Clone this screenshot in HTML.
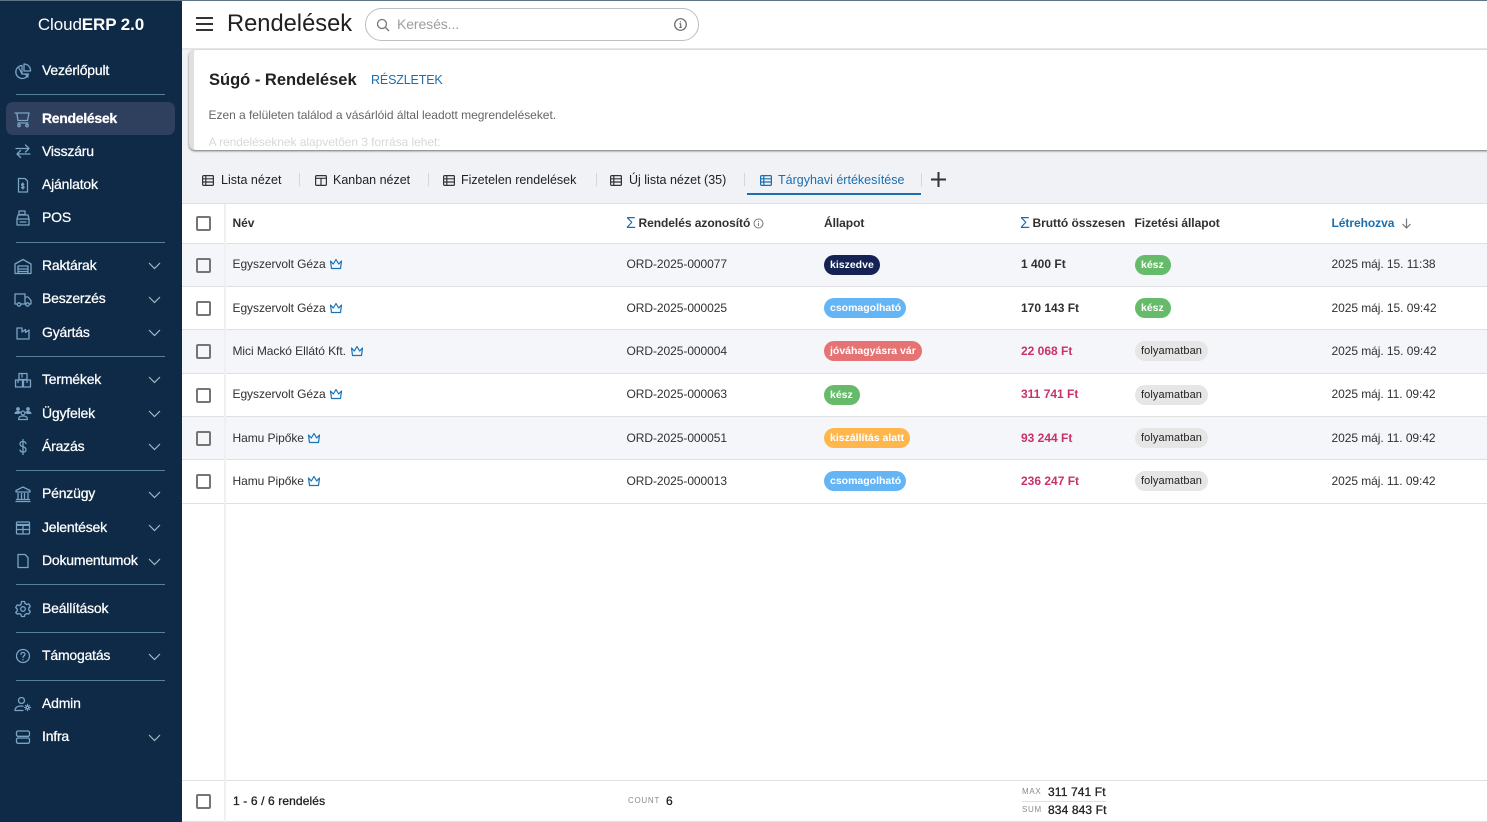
<!DOCTYPE html>
<html lang="hu">
<head>
<meta charset="utf-8">
<title>Rendelések</title>
<style>
html,body{margin:0;padding:0;width:1487px;height:822px;overflow:hidden;background:#f1f2f6;font-family:"Liberation Sans",sans-serif;color:#212121}
*{box-sizing:border-box}
.a{position:absolute;white-space:nowrap}
#side{position:absolute;left:0;top:0;width:182px;height:822px;background:#0e2a47}
#top{position:absolute;left:0;top:0;width:1487px;height:1px;background:#5f7484;z-index:5}
.logo{left:0;width:182px;text-align:center;top:15px;font-size:17px;line-height:20px;color:#fff;letter-spacing:-.1px}
.logo b{font-weight:700}
.hl{position:absolute;left:16px;width:149px;height:1px;background:#5a7f9e}
.act{position:absolute;left:6px;top:102px;width:169px;height:33px;border-radius:7px;background:#2f405f}
.it{position:absolute;left:42px;font-size:14px;line-height:16px;color:#fff;-webkit-text-stroke:.25px #fff;white-space:nowrap;letter-spacing:-.2px}
.ic{position:absolute;left:14px;width:18px;height:18px;fill:none;stroke:#7ba3c4;stroke-width:1.3;stroke-linecap:round;stroke-linejoin:round}
.ch{position:absolute;left:148px;width:13px;height:8px;fill:none;stroke:#a5b8c9;stroke-width:1.2}
#hdr{position:absolute;left:182px;top:1px;width:1305px;height:47px;background:#fff}
#hsep{position:absolute;left:182px;top:48px;width:1305px;height:2px;background:#e7e7e7}
.title{left:227px;top:9px;font-size:23.7px;line-height:30px;color:#212121}
.search{position:absolute;left:365px;top:8px;width:334px;height:33px;border:1px solid #bdbdbd;border-radius:17px;background:#fff}
#card{position:absolute;left:189px;top:50px;width:1310px;height:100px;background:#fff;border-left:5px solid #e3dfdd;border-radius:6px;box-shadow:0 1px 2px rgba(0,0,0,.55);overflow:hidden}
.tab{top:172px;font-size:12.5px;line-height:16px;color:#212121}
.tsep{position:absolute;top:173px;width:1px;height:13px;background:#d4d6dc}
.tic{position:absolute;top:175px;width:12px;height:11px;fill:none;stroke:#333;stroke-width:1.2}
#tbl{position:absolute;left:182px;top:204px;width:1305px;height:618px;background:#fff}
.line{position:absolute;left:182px;width:1305px;height:1px;background:#e0e0e0}
.row{position:absolute;left:182px;width:1305px;background:#f5f6fa}
#vl{position:absolute;left:224px;top:204px;width:2px;height:618px;background:#f0f0f0}
.cb{position:absolute;left:196px;width:15px;height:15px;border:2px solid #757575;border-radius:2px;background:transparent}
.th{top:215px;margin-top:1px;font-size:12px;line-height:15px;font-weight:700;color:#303030;letter-spacing:-.05px}
.td{margin-top:1px;font-size:12px;line-height:15px;color:#303030}
.o{letter-spacing:-.06px}
.b{font-weight:700}
.red{color:#c9306b;font-weight:700}
.pill{position:absolute;height:20px;border-radius:10px;font-size:10.5px;line-height:21px;font-weight:700;color:#fff;padding:0 6px;white-space:nowrap}
.gr{background:#66bb6a}.bl{background:#64b5f6}.rd{background:#e57373}.or{background:#ffb74d}.nv{background:#152354}
.fo{background:#e6e6e6;color:#222;font-weight:400;font-size:11px;letter-spacing:.1px}
.cr{position:absolute;width:14px;height:12px;fill:none;stroke:#1a73b8;stroke-width:1.2;stroke-linejoin:round}
.sig{position:absolute;top:215.500px;font-size:16px;line-height:16px;color:#1a6fb0}
.small{font-size:8px;line-height:10px;letter-spacing:.7px;color:#8a8a8a}
.ft{font-size:12px;line-height:14px;color:#212121;-webkit-text-stroke:.3px #212121;letter-spacing:.12px}
</style>
</head>
<body>
<div id="top"></div>
<div id="side">
  <div class="a logo">Cloud<b>ERP 2.0</b></div>

  <svg class="ic" style="top:62px" viewBox="0 0 18 18"><path d="M8 3.500a6.500 6.500 0 1 0 6.500 8.500H8z"/><path d="M10 2v7h6.500a6.500 6.500 0 0 0-6.500-7z"/><path d="M5 6l3 6M11 12l3 3"/></svg>
  <div class="it" style="top:62px">Vezérlőpult</div>
  <div class="hl" style="top:94px"></div>

  <div class="act"></div>
  <svg class="ic" style="top:110px" viewBox="0 0 18 18"><path d="M1 3h14l-1.500 7.500H4L2.800 3M4 13h10"/><circle cx="5" cy="15.500" r="1.200"/><circle cx="13" cy="15.500" r="1.200"/></svg>
  <div class="it" style="top:110px;font-weight:700;letter-spacing:-.3px">Rendelések</div>

  <svg class="ic" style="top:142px" viewBox="0 0 18 18"><path d="M2 6.500h13M11.500 3l3.500 3.500L11.500 10M16 12H3M6.500 8.500L3 12l3.500 3.500"/></svg>
  <div class="it" style="top:143px">Visszáru</div>

  <svg class="ic" style="top:176px" viewBox="0 0 18 18"><path d="M4.500 2.500h6.500l2.500 2.500v11h-9z"/><path d="M9.800 8.500C9.500 8 9.200 7.800 8.800 7.800c-.8 0-1.200.4-1.200 1s.5.900 1.200 1.200 1.200.6 1.200 1.200-.4 1-1.200 1c-.5 0-.9-.2-1.200-.7M8.800 7v6"/></svg>
  <div class="it" style="top:176px">Ajánlatok</div>

  <svg class="ic" style="top:209px" viewBox="0 0 18 18"><path d="M5 2h6v3.500H5zM4 6h10l1 4H3zM3 10h12v6H3z"/><path d="M6 13h6"/></svg>
  <div class="it" style="top:209px">POS</div>
  <div class="hl" style="top:242px"></div>

  <svg class="ic" style="top:257px" viewBox="0 0 18 18"><path d="M1 7l8-4.500L17 7v9.500H1zM4 9h10v7.500H4zM4 12h10M4 14.500h10"/></svg>
  <div class="it" style="top:257px">Raktárak</div>
  <svg class="ch" style="top:262px" viewBox="0 0 13 8"><path d="M1 1l5.500 5.500L12 1"/></svg>

  <svg class="ic" style="top:290px" viewBox="0 0 18 18"><path d="M3.500 14H1V4h10v10H7M11 7h3l3 3.500V14h-1.500M11 14h1"/><circle cx="5" cy="14.500" r="1.700"/><circle cx="13.500" cy="14.500" r="1.700"/></svg>
  <div class="it" style="top:290px">Beszerzés</div>
  <svg class="ch" style="top:296px" viewBox="0 0 13 8"><path d="M1 1l5.500 5.500L12 1"/></svg>

  <svg class="ic" style="top:324px" viewBox="0 0 18 18"><path d="M3 4v11h12V6l-3.500 2.500V5.500L8 8V4z"/></svg>
  <div class="it" style="top:324px">Gyártás</div>
  <svg class="ch" style="top:329px" viewBox="0 0 13 8"><path d="M1 1l5.500 5.500L12 1"/></svg>
  <div class="hl" style="top:356px"></div>

  <svg class="ic" style="top:371px" viewBox="0 0 18 18"><path d="M5 2.500h8v6H5zM1.500 9h7v7h-7zM9.500 9h7v7h-7zM8 3v3M4 9v2.500M13 9v2.500"/></svg>
  <div class="it" style="top:371px">Termékek</div>
  <svg class="ch" style="top:376px" viewBox="0 0 13 8"><path d="M1 1l5.500 5.500L12 1"/></svg>

  <svg class="ic" style="top:404px;fill:#7ba3c4;stroke:none" viewBox="0 0 18 18"><circle cx="4" cy="5" r="1.900"/><circle cx="14" cy="5" r="1.900"/><path d="M.5 10c0-2 1.500-3 3.500-3s3 .8 3 1.500L5 10zM17.500 10c0-2-1.500-3-3.500-3s-3 .8-3 1.500L13 10z"/><circle cx="9" cy="9" r="1.900" fill="none" stroke="#7ba3c4" stroke-width="1.200"/><path d="M4.500 15.500c0-2.500 2-3.500 4.500-3.500s4.500 1 4.500 3.500z" fill="none" stroke="#7ba3c4" stroke-width="1.200"/></svg>
  <div class="it" style="top:405px">Ügyfelek</div>
  <svg class="ch" style="top:410px" viewBox="0 0 13 8"><path d="M1 1l5.500 5.500L12 1"/></svg>

  <svg class="ic" style="top:438px" viewBox="0 0 18 18"><path d="M12 5.500C11.500 4 10.500 3.500 9 3.500c-2 0-3 1-3 2.500s1.200 2.200 3 2.800 3 1.300 3 2.800-1 2.500-3 2.500c-1.500 0-2.600-.6-3-2M9 1.500v15"/></svg>
  <div class="it" style="top:438px">Árazás</div>
  <svg class="ch" style="top:443px" viewBox="0 0 13 8"><path d="M1 1l5.500 5.500L12 1"/></svg>
  <div class="hl" style="top:470px"></div>

  <svg class="ic" style="top:485px" viewBox="0 0 18 18"><path d="M9 2l7 3.500v1.500H2V5.500zM4 8.500v5M7.500 8.500v5M10.500 8.500v5M14 8.500v5M2.500 14.500h13M2 16.500h14"/></svg>
  <div class="it" style="top:485px">Pénzügy</div>
  <svg class="ch" style="top:491px" viewBox="0 0 13 8"><path d="M1 1l5.500 5.500L12 1"/></svg>

  <svg class="ic" style="top:519px" viewBox="0 0 18 18"><path d="M3.500 3h11a1 1 0 0 1 1 1v10a1 1 0 0 1-1 1h-11a1 1 0 0 1-1-1V4a1 1 0 0 1 1-1zM2.500 5.500h13M2.500 6.300h13M2.500 10.500h13M9 6v9"/></svg>
  <div class="it" style="top:519px">Jelentések</div>
  <svg class="ch" style="top:524px" viewBox="0 0 13 8"><path d="M1 1l5.500 5.500L12 1"/></svg>

  <svg class="ic" style="top:552px" viewBox="0 0 18 18"><path d="M4 2.500h7l3 3v10H4z"/></svg>
  <div class="it" style="top:552px">Dokumentumok</div>
  <svg class="ch" style="top:558px" viewBox="0 0 13 8"><path d="M1 1l5.500 5.500L12 1"/></svg>
  <div class="hl" style="top:584px"></div>

  <svg class="ic" style="top:600px" viewBox="0 0 18 18"><path d="M7.500 2h3l.5 2 1.800 1 2-.6 1.500 2.600-1.500 1.500v2l1.500 1.500-1.500 2.600-2-.6-1.800 1-.5 2h-3l-.5-2-1.800-1-2 .6L1.700 13l1.500-1.500v-2L1.700 8l1.500-2.600 2 .6L7 5z" transform="translate(0 -.5)"/><circle cx="9" cy="9" r="2.300"/></svg>
  <div class="it" style="top:600px">Beállítások</div>
  <div class="hl" style="top:632px"></div>

  <svg class="ic" style="top:647px" viewBox="0 0 18 18"><circle cx="9" cy="9" r="6.500"/><path d="M7 7.300C7 6 8 5.500 9 5.500s2 .7 2 1.800c0 1.500-2 1.500-2 3"/><path d="M9 12.500v.3"/></svg>
  <div class="it" style="top:647px">Támogatás</div>
  <svg class="ch" style="top:653px" viewBox="0 0 13 8"><path d="M1 1l5.500 5.500L12 1"/></svg>
  <div class="hl" style="top:680px"></div>

  <svg class="ic" style="top:695px" viewBox="0 0 18 18"><circle cx="7.500" cy="5.500" r="3"/><path d="M1 15.500c0-3 2.500-4.500 6-4.500 .8 0 1.500.1 2 .2M1 15.500h8"/><circle cx="13.500" cy="12.500" r="1.300"/><path d="M13.500 9.300v1.200M13.500 14.500v1.200M10.500 12.500h1.200M15.500 12.500h1.200M11.400 10.400l.8.8M14.800 13.800l.8.8M11.400 14.600l.8-.8M14.800 11.200l.8-.8" stroke-width="1.100"/></svg>
  <div class="it" style="top:695px">Admin</div>

  <svg class="ic" style="top:728px" viewBox="0 0 18 18"><rect x="2.500" y="3" width="13" height="5.300" rx="1.500"/><rect x="2.500" y="10" width="13" height="5.300" rx="1.500"/></svg>
  <div class="it" style="top:728px">Infra</div>
  <svg class="ch" style="top:734px" viewBox="0 0 13 8"><path d="M1 1l5.500 5.500L12 1"/></svg>
</div>

<div id="hdr"></div>
<div id="hsep"></div>
<svg class="a" style="left:195px;top:16px" width="19" height="16" viewBox="0 0 19 16"><path d="M1 2h17M1 8h17M1 14h17" stroke="#333" stroke-width="2" fill="none"/></svg>
<div class="a title">Rendelések</div>
<div class="search"></div>
<svg class="a" style="left:376px;top:18px" width="14" height="14" viewBox="0 0 14 14"><circle cx="6" cy="6" r="4.500" fill="none" stroke="#757575" stroke-width="1.300"/><path d="M9.500 9.500L13 13" stroke="#757575" stroke-width="1.300"/></svg>
<div class="a" style="left:397px;top:16px;font-size:14px;line-height:17px;color:#9e9e9e;letter-spacing:-.1px">Keresés...</div>
<svg class="a" style="left:673px;top:17px" width="15" height="15" viewBox="0 0 15 15"><circle cx="7.500" cy="7.500" r="5.800" fill="none" stroke="#666" stroke-width="1.200"/><path d="M6.500 6.800h1.200v3.200M6.300 10.300h2.600M7.500 4.300v1" stroke="#666" stroke-width="1.100" fill="none"/></svg>

<div id="card"></div>
<div class="a" style="left:209px;top:70px;font-size:16.5px;line-height:20px;font-weight:700;color:#212121">Súgó - Rendelések</div>
<div class="a" style="left:371px;top:72px;font-size:12.5px;line-height:16px;color:#1a6fb0;letter-spacing:-.15px">RÉSZLETEK</div>
<div class="a" style="left:208.500px;top:108px;font-size:12px;line-height:15px;color:#666;letter-spacing:-.03px">Ezen a felületen találod a vásárlóid által leadott megrendeléseket.</div>
<div class="a" style="left:208.500px;top:135px;font-size:12px;line-height:15px;height:14px;overflow:hidden;color:#d8d8d8;letter-spacing:-.05px">A rendeléseknek alapvetően 3 forrása lehet:</div>

<svg class="tic" style="left:202px" viewBox="0 0 12 11"><rect x=".6" y=".6" width="10.800" height="9.800" rx="1"/><path d="M.6 3.800h10.800M.6 7h10.800M3.800 .6v9.800"/></svg>
<div class="a tab" style="left:221px">Lista nézet</div>
<div class="tsep" style="left:299px"></div>
<svg class="tic" style="left:315px" viewBox="0 0 12 11"><rect x=".6" y=".6" width="10.800" height="9.800" rx="1"/><path d="M.6 3.300h10.800M6 3.300v7" /></svg>
<div class="a tab" style="left:333px">Kanban nézet</div>
<div class="tsep" style="left:428px"></div>
<svg class="tic" style="left:443px" viewBox="0 0 12 11"><rect x=".6" y=".6" width="10.800" height="9.800" rx="1"/><path d="M.6 3.800h10.800M.6 7h10.800M3.800 .6v9.800"/></svg>
<div class="a tab" style="left:461px">Fizetelen rendelések</div>
<div class="tsep" style="left:596px"></div>
<svg class="tic" style="left:610px" viewBox="0 0 12 11"><rect x=".6" y=".6" width="10.800" height="9.800" rx="1"/><path d="M.6 3.800h10.800M.6 7h10.800M3.800 .6v9.800"/></svg>
<div class="a tab" style="left:629px">Új lista nézet (35)</div>
<div class="tsep" style="left:744px"></div>
<svg class="tic" style="left:760px;stroke:#1a6fb0" viewBox="0 0 12 11"><rect x=".6" y=".6" width="10.800" height="9.800" rx="1"/><path d="M.6 3.800h10.800M.6 7h10.800M3.800 .6v9.800"/></svg>
<div class="a tab" style="left:778px;color:#1a6fb0">Tárgyhavi értékesítése</div>
<div class="a" style="left:747px;top:193px;width:174px;height:2px;background:#1a6fb0"></div>
<div class="tsep" style="left:921px"></div>
<svg class="a" style="left:930px;top:171px" width="17" height="17" viewBox="0 0 17 17"><path d="M8.500 1v15M1 8.500h15" stroke="#333" stroke-width="2" fill="none"/></svg>

<div class="line" style="top:203px"></div>
<div id="tbl"></div>
<div class="row" style="top:244px;height:42px"></div>
<div class="row" style="top:330px;height:43px"></div>
<div class="row" style="top:417px;height:42px"></div>
<div class="line" style="top:243px"></div>
<div class="line" style="top:286px"></div>
<div class="line" style="top:329px"></div>
<div class="line" style="top:373px"></div>
<div class="line" style="top:416px"></div>
<div class="line" style="top:459px"></div>
<div class="line" style="top:503px"></div>
<div class="line" style="top:780px"></div>
<div class="line" style="top:821px"></div>
<div id="vl"></div>

<div class="cb" style="top:216px"></div>
<div class="cb" style="top:258px"></div>
<div class="cb" style="top:301px"></div>
<div class="cb" style="top:344px"></div>
<div class="cb" style="top:388px"></div>
<div class="cb" style="top:431px"></div>
<div class="cb" style="top:474px"></div>
<div class="cb" style="top:794px"></div>

<div class="a th" style="left:232.500px">Név</div>
<div class="sig" style="left:626px">Σ</div>
<div class="a th" style="left:638.500px">Rendelés azonosító</div>
<svg class="a" style="left:753px;top:218px" width="11" height="11" viewBox="0 0 11 11"><circle cx="5.500" cy="5.500" r="4.500" fill="none" stroke="#777"/><path d="M5.500 5v3M5.500 3v1" stroke="#777"/></svg>
<div class="a th" style="left:824px">Állapot</div>
<div class="sig" style="left:1020px">Σ</div>
<div class="a th" style="left:1032.500px">Bruttó összesen</div>
<div class="a th" style="left:1134.500px">Fizetési állapot</div>
<div class="a th" style="left:1331.500px;color:#1a6fb0">Létrehozva</div>
<svg class="a" style="left:1401px;top:218px" width="11" height="11" viewBox="0 0 11 11"><path d="M5.500 .5v9.500M1.500 6l4 4 4-4" stroke="#777" stroke-width="1.200" fill="none"/></svg>

<!-- row 1 -->
<div class="a td o" style="left:232.500px;top:256px">Egyszervolt Géza</div>
<svg class="cr" style="left:329px;top:258px" viewBox="0 0 14 12"><path d="M1.500 3l2.800 3L7 1.500 9.700 6l2.800-3-1 7.500h-9z"/></svg>
<div class="a td o" style="left:626.500px;top:256px">ORD-2025-000077</div>
<div class="pill nv" style="left:824px;top:255px">kiszedve</div>
<div class="a td b" style="left:1021px;top:256px">1 400 Ft</div>
<div class="pill gr" style="left:1135px;top:255px;width:36px">kész</div>
<div class="a td o" style="left:1331.500px;top:256px">2025 máj. 15. 11:38</div>

<!-- row 2 -->
<div class="a td o" style="left:232.500px;top:300px">Egyszervolt Géza</div>
<svg class="cr" style="left:329px;top:302px" viewBox="0 0 14 12"><path d="M1.500 3l2.800 3L7 1.500 9.700 6l2.800-3-1 7.500h-9z"/></svg>
<div class="a td o" style="left:626.500px;top:300px">ORD-2025-000025</div>
<div class="pill bl" style="left:824px;top:298px;width:82px">csomagolható</div>
<div class="a td b" style="left:1021px;top:300px">170 143 Ft</div>
<div class="pill gr" style="left:1135px;top:298px;width:36px">kész</div>
<div class="a td o" style="left:1331.500px;top:300px">2025 máj. 15. 09:42</div>

<!-- row 3 -->
<div class="a td o" style="left:232.500px;top:343px">Mici Mackó Ellátó Kft.</div>
<svg class="cr" style="left:350px;top:345px" viewBox="0 0 14 12"><path d="M1.500 3l2.800 3L7 1.500 9.700 6l2.800-3-1 7.500h-9z"/></svg>
<div class="a td o" style="left:626.500px;top:343px">ORD-2025-000004</div>
<div class="pill rd" style="left:824px;top:341px">jóváhagyásra vár</div>
<div class="a td red" style="left:1021px;top:343px">22 068 Ft</div>
<div class="pill fo" style="left:1135px;top:341px">folyamatban</div>
<div class="a td o" style="left:1331.500px;top:343px">2025 máj. 15. 09:42</div>

<!-- row 4 -->
<div class="a td o" style="left:232.500px;top:386px">Egyszervolt Géza</div>
<svg class="cr" style="left:329px;top:388px" viewBox="0 0 14 12"><path d="M1.500 3l2.800 3L7 1.500 9.700 6l2.800-3-1 7.500h-9z"/></svg>
<div class="a td o" style="left:626.500px;top:386px">ORD-2025-000063</div>
<div class="pill gr" style="left:824px;top:385px;width:36px">kész</div>
<div class="a td red" style="left:1021px;top:386px">311 741 Ft</div>
<div class="pill fo" style="left:1135px;top:385px">folyamatban</div>
<div class="a td o" style="left:1331.500px;top:386px">2025 máj. 11. 09:42</div>

<!-- row 5 -->
<div class="a td o" style="left:232.500px;top:430px">Hamu Pipőke</div>
<svg class="cr" style="left:307px;top:432px" viewBox="0 0 14 12"><path d="M1.500 3l2.800 3L7 1.500 9.700 6l2.800-3-1 7.500h-9z"/></svg>
<div class="a td o" style="left:626.500px;top:430px">ORD-2025-000051</div>
<div class="pill or" style="left:824px;top:428px">kiszállítás alatt</div>
<div class="a td red" style="left:1021px;top:430px">93 244 Ft</div>
<div class="pill fo" style="left:1135px;top:428px">folyamatban</div>
<div class="a td o" style="left:1331.500px;top:430px">2025 máj. 11. 09:42</div>

<!-- row 6 -->
<div class="a td o" style="left:232.500px;top:473px">Hamu Pipőke</div>
<svg class="cr" style="left:307px;top:475px" viewBox="0 0 14 12"><path d="M1.500 3l2.800 3L7 1.500 9.700 6l2.800-3-1 7.500h-9z"/></svg>
<div class="a td o" style="left:626.500px;top:473px">ORD-2025-000013</div>
<div class="pill bl" style="left:824px;top:471px;width:82px">csomagolható</div>
<div class="a td red" style="left:1021px;top:473px">236 247 Ft</div>
<div class="pill fo" style="left:1135px;top:471px">folyamatban</div>
<div class="a td o" style="left:1331.500px;top:473px">2025 máj. 11. 09:42</div>

<!-- footer -->
<div class="a ft" style="left:233px;top:794px">1 - 6 / 6 rendelés</div>
<div class="a small" style="left:628px;top:796px">COUNT</div>
<div class="a ft" style="left:666px;top:794px">6</div>
<div class="a small" style="left:1022px;top:787px">MAX</div>
<div class="a ft" style="left:1048px;top:785px">311 741 Ft</div>
<div class="a" style="left:1022px;top:801px;width:84px;height:1px;background:#e0e0e0"></div>
<div class="a small" style="left:1022px;top:805px">SUM</div>
<div class="a ft" style="left:1048px;top:803px">834 843 Ft</div>
</body>
</html>
